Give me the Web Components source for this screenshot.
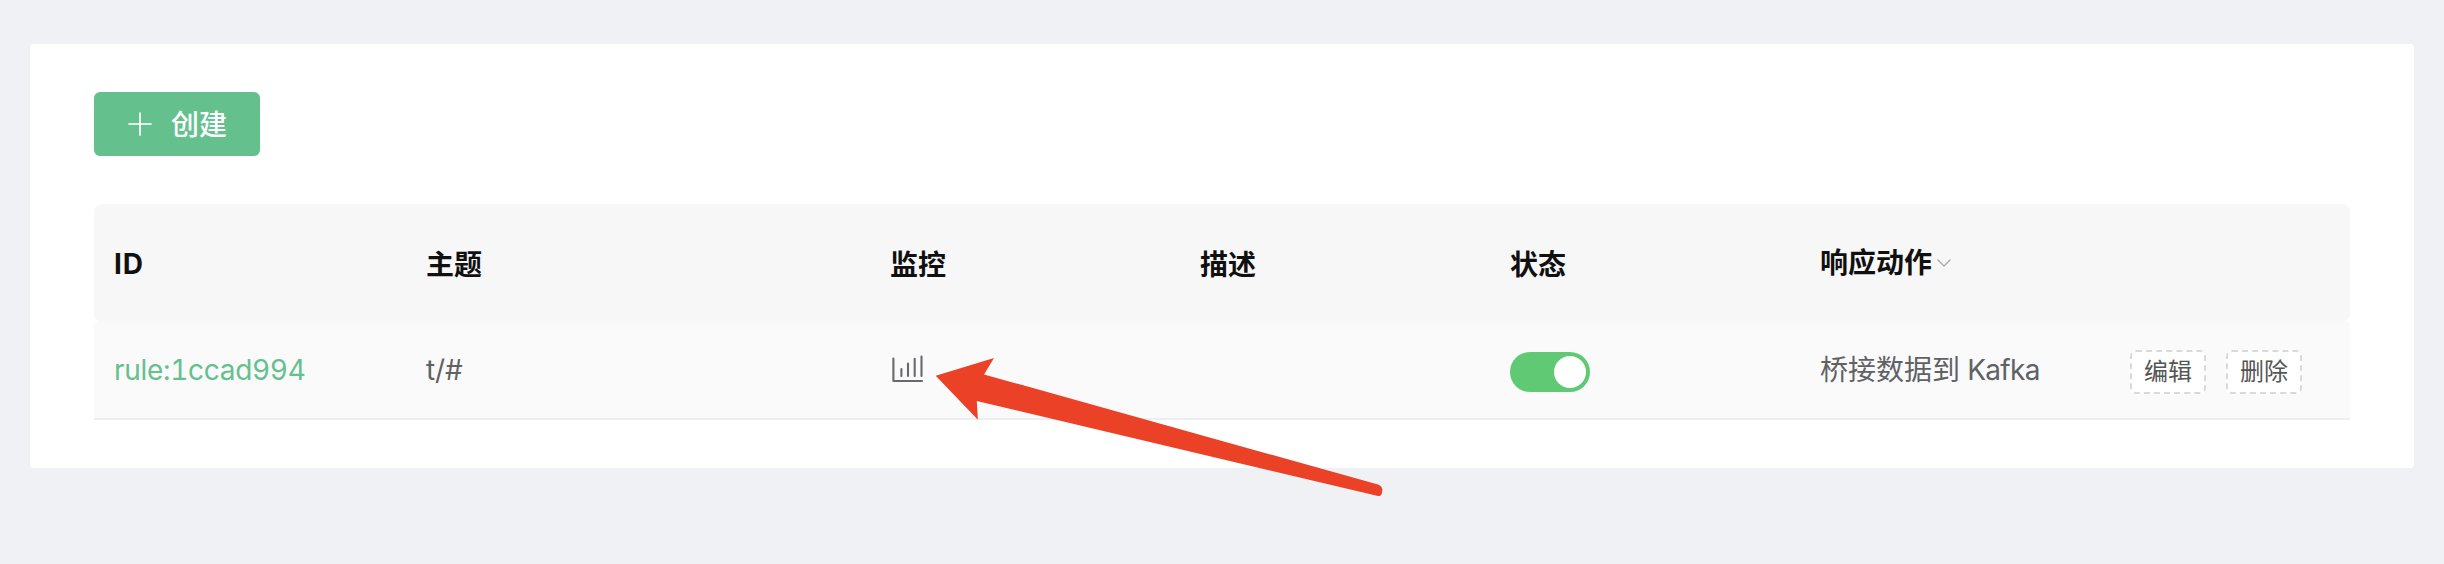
<!DOCTYPE html>
<html lang="zh-CN">
<head>
<meta charset="utf-8">
<title>规则</title>
<style>
  html, body { margin: 0; height: 100%; }
  body {
    background: #f0f1f5;
    color: #606266;
    font-family: Inter, "Noto Sans CJK SC", sans-serif;
    font-size: 28px;
    overflow: hidden;
  }
</style>
</head>
<body>
<rule-page></rule-page>
<script>
const define = (name, html) => {
  const template = document.createElement('template');
  template.innerHTML = html;
  customElements.define(name, class extends HTMLElement {
    constructor() {
      super();
      this.attachShadow({ mode: 'open' }).append(template.content.cloneNode(true));
    }
  });
};

define('create-button', `
  <style>
    :host { display: flex; align-items: center; box-sizing: border-box; width: 166px; height: 64px;
      padding-left: 34px; gap: 19px; border-radius: 6px; background: #64c18e; color: #fff;
      font-weight: 500; line-height: 40px; }
    svg { display: block; flex: none; }
    span { margin-top: 1px; }
  </style>
  <svg width="24" height="24" viewBox="0 0 24 24" fill="none" stroke="#fff" stroke-width="1.7" stroke-linecap="round"><path d="M12 1v22M1 12h22"/></svg>
  <span><slot></slot></span>`);

define('table-row', `
  <style>
    :host { display: grid; grid-template-columns: 312px 464px 310px 310px 310px 310px 240px;
      align-items: center; height: 96px; background: #fafafa; border-bottom: 2px solid #ebeef5; }
    :host([head]) { height: 118px; border: 0; border-radius: 8px; background: #f7f7f7;
      color: #101010; font-weight: 700; }
  </style>
  <slot></slot>`);

define('table-cell', `
  <style>
    :host { display: flex; align-items: center; padding-left: 20px; line-height: 40px; white-space: nowrap; }
    :host([link]) { color: #64c18e; }
  </style>
  <slot></slot>`);

define('chart-icon', `
  <style>:host { display: block; margin-top: -4px; } svg { display: block; }</style>
  <svg width="36" height="32" viewBox="0 0 36 32" fill="none" stroke="#68696e" stroke-width="2.1" stroke-linecap="round" stroke-linejoin="round"><path d="M3.4 6.5V29H32M11.4 17v7M18 11.5V24M24.7 6.7V24M31.5 4.5V24"/></svg>`);

define('chevron-icon', `
  <style>:host { display: block; margin-left: 4px; } svg { display: block; }</style>
  <svg width="16" height="10" viewBox="0 0 16 10" fill="none" stroke="#aaa" stroke-width="1.4" stroke-linecap="round" stroke-linejoin="round"><path d="M2 2l6 6 6-6"/></svg>`);

define('toggle-switch', `
  <style>
    :host { display: flex; justify-content: flex-end; box-sizing: border-box; width: 80px; height: 40px;
      margin-top: 4px; padding: 4px; border-radius: 20px; background: #5fca73; }
    i { width: 32px; height: 32px; border-radius: 50%; background: #fff; }
  </style><i></i>`);

define('dashed-button', `
  <style>
    :host { display: block; box-sizing: border-box; width: 76px; height: 44px; margin: 4px 20px 0 0;
      border: 2px dashed #d9d9d9; border-radius: 6px; background: #fff; color: #555;
      font-size: 24px; line-height: 39px; text-align: center; }
  </style><slot></slot>`);

define('pointer-arrow', `
  <style>:host { display: block; position: absolute; left: 930px; top: 350px; } svg { display: block; }</style>
  <svg width="460" height="155" viewBox="930 350 460 155"><path fill="#eb4126" d="M935.7 375.7L994 358 984 374.4 1378 484.5Q1383 486.8 1382.3 490.5Q1382 496.8 1378 496L976.8 401 977.9 419.7Z"/></svg>`);

define('rule-page', `
  <style>
    :host { display: block; padding: 44px 30px 0; }
    main { box-sizing: border-box; height: 424px; padding: 48px 64px; border-radius: 4px; background: #fff; }
    section { margin-top: 48px; }
    .id { font-feature-settings: "tnum"; letter-spacing: -.3px; }
    .topic { letter-spacing: -.1px; }
    .latin { letter-spacing: -.7px; }
    .lift { display: block; margin-top: -1px; }
    .h { display: block; margin-top: 3px; }
    .wide { letter-spacing: .8px; margin-top: 2px; }
  </style>
  <main>
    <create-button>创建</create-button>
    <section>
      <table-row head>
        <table-cell><span class="h wide">ID</span></table-cell>
        <table-cell><span class="h">主题</span></table-cell>
        <table-cell><span class="h">监控</span></table-cell>
        <table-cell><span class="h">描述</span></table-cell>
        <table-cell><span class="h">状态</span></table-cell>
        <table-cell><span class="lift">响应动作</span><chevron-icon></chevron-icon></table-cell>
        <table-cell></table-cell>
      </table-row>
      <table-row>
        <table-cell link><span class="id">rule:1ccad994</span></table-cell>
        <table-cell><span class="topic">t/#</span></table-cell>
        <table-cell><chart-icon></chart-icon></table-cell>
        <table-cell></table-cell>
        <table-cell><toggle-switch></toggle-switch></table-cell>
        <table-cell><span>桥接数据到<span class="latin"> Kafka</span></span></table-cell>
        <table-cell><dashed-button>编辑</dashed-button><dashed-button>删除</dashed-button></table-cell>
      </table-row>
    </section>
  </main>
  <pointer-arrow></pointer-arrow>`);
</script>
</body>
</html>
